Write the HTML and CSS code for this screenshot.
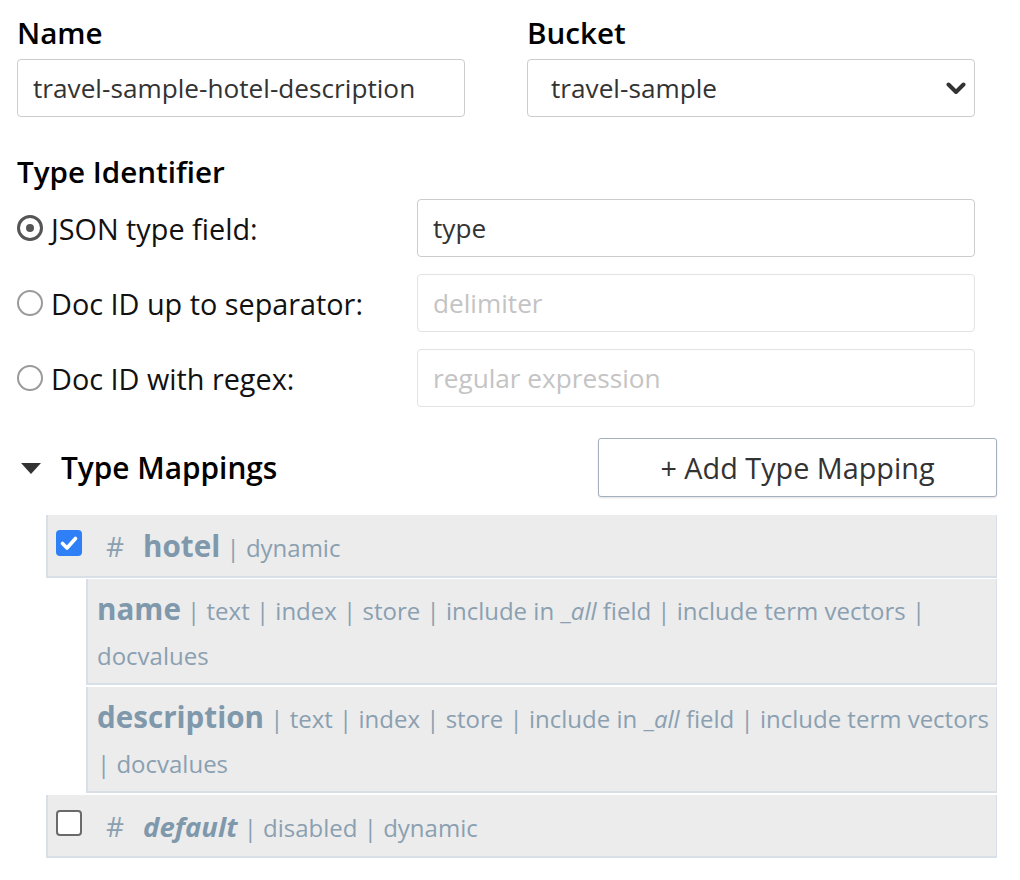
FILE: index.html
```html
<!DOCTYPE html>
<html>
<head>
<meta charset="utf-8">
<link rel="stylesheet" href="styles.css">
</head>
<body>
<div class="page">
  <div class="top-row">
    <div class="field">
      <div class="lbl">Name</div>
      <input class="text-input" type="text" value="travel-sample-hotel-description">
    </div>
    <div class="field">
      <div class="lbl">Bucket</div>
      <div class="select">
        <span>travel-sample</span>
        <svg class="chev" width="20" height="13" viewBox="0 0 20 13"><path d="M2.5 2.5 L10 10 L17.5 2.5" fill="none" stroke="#333" stroke-width="4" stroke-linecap="round" stroke-linejoin="round"/></svg>
      </div>
    </div>
  </div>

  <div class="type-id">
    <div class="lbl">Type Identifier</div>
    <div class="radio-row">
      <label class="radio-lbl"><span class="radio checked"></span>JSON type field:</label>
      <input class="text-input" type="text" value="type">
    </div>
    <div class="radio-row">
      <label class="radio-lbl"><span class="radio"></span>Doc ID up to separator:</label>
      <input class="text-input dim" type="text" placeholder="delimiter">
    </div>
    <div class="radio-row">
      <label class="radio-lbl"><span class="radio"></span>Doc ID with regex:</label>
      <input class="text-input dim" type="text" placeholder="regular expression">
    </div>
  </div>

  <div class="mappings-head">
    <div class="toggle">
      <svg class="tri" width="20" height="11" viewBox="0 0 20 11"><path d="M0 0 H20 L10 11 Z" fill="#333"/></svg>
      <span>Type Mappings</span>
    </div>
    <button class="add-btn">+ Add Type Mapping</button>
  </div>

  <div class="mapping-list">
    <div class="mapping">
      <div class="map-row">
        <span class="cb checked"><svg width="26" height="26" viewBox="0 0 26 26"><path d="M6.5 13.5 L11 18 L19.5 8.5" fill="none" stroke="#fff" stroke-width="3.6" stroke-linecap="round" stroke-linejoin="round"/></svg></span><span class="hash">#</span><span class="name">hotel</span> <span class="sep">|</span> dynamic
      </div>
      <div class="fields">
        <div class="field-row"><span class="name">name</span> <span class="sep">|</span> text <span class="sep">|</span> index <span class="sep">|</span> store <span class="sep">|</span> include in _<i>all</i> field <span class="sep">|</span> include term vectors <span class="sep">|</span> docvalues</div>
        <div class="field-row"><span class="name">description</span> <span class="sep">|</span> text <span class="sep">|</span> index <span class="sep">|</span> store <span class="sep">|</span> include in _<i>all</i> field <span class="sep">|</span> include term vectors <span class="sep">|</span> docvalues</div>
      </div>
    </div>
    <div class="mapping">
      <div class="map-row">
        <span class="cb"></span><span class="hash">#</span><span class="name it">default</span> <span class="sep">|</span> disabled <span class="sep">|</span> dynamic
      </div>
    </div>
  </div>
</div>
</body>
</html>
```

FILE: styles.css
```css
* { box-sizing: border-box; }
html, body { margin: 0; padding: 0; background: #fff; }
body { font-family: "Open Sans", "Liberation Sans", sans-serif; color: #111; }

.page {
  width: 997px;
  padding: 15px 0 0 17px;
}

.lbl {
  font-size: 29.6px;
  font-weight: 600;
  line-height: 36px;
  color: #000;
  margin-bottom: 8px;
}

.top-row {
  display: flex;
  gap: 62px;
  width: 958px;
}
.field { width: 448px; }

.text-input {
  display: block;
  width: 100%;
  height: 58px;
  border: 1px solid #cccccc;
  border-radius: 4px;
  padding: 0 15px;
  font-family: "Open Sans", "Liberation Sans", sans-serif;
  font-size: 26.2px;
  color: #333;
  background: #fff;
  outline: none;
}
.text-input.dim { border-color: #e3e3e3; }
.text-input::placeholder { color: #c4c4c4; }

.select {
  height: 58px;
  border: 1px solid #cccccc;
  border-radius: 4px;
  padding: 0 8px 0 23px;
  display: flex;
  align-items: center;
  justify-content: space-between;
  font-size: 26.2px;
  color: #333;
}

.type-id { margin-top: 37px; width: 958px; }
.type-id .lbl { margin-bottom: 9px; }

.radio-row {
  display: grid;
  grid-template-columns: 400px 558px;
  align-items: center;
  margin-bottom: 17px;
}
.radio-row:last-child { margin-bottom: 0; }

.radio-lbl {
  display: flex;
  align-items: center;
  font-size: 28.8px;
  color: #111;
}
.radio {
  width: 26px;
  height: 26px;
  border-radius: 50%;
  border: 2px solid #9a9a9a;
  margin-right: 8px;
  position: relative;
  flex: none;
}
.radio.checked {
  border: 3px solid #555;
}
.radio.checked::after {
  content: "";
  position: absolute;
  left: 6px;
  top: 6px;
  width: 8px;
  height: 8px;
  border-radius: 50%;
  background: #555;
}

.mappings-head {
  margin-top: 31px;
  display: flex;
  justify-content: space-between;
  align-items: center;
  width: 980px;
}
.toggle {
  display: flex;
  align-items: center;
  font-size: 29.8px;
  font-weight: 600;
  color: #000;
}
.tri { margin-left: 4px; margin-right: 20px; margin-top: 2px; }

.add-btn {
  width: 399px;
  height: 59px;
  border: 1px solid #a4b0bd;
  border-radius: 3px;
  background: #fff;
  box-shadow: 0 1px 2px rgba(0,0,0,0.12);
  font-family: "Open Sans", "Liberation Sans", sans-serif;
  font-size: 28.8px;
  color: #333;
  padding: 0;
}

.mapping-list {
  margin: 18px 0 0 29px;
  width: 951px;
}
.mapping { margin-bottom: 2px; }

.map-row, .field-row {
  background: #ececec;
  border-left: 2px solid #d8dfe7;
  border-right: 1px solid #d8dfe7;
  border-bottom: 2px solid #d8dfe7;
  font-size: 24px;
  line-height: 45px;
  color: #8aa0b1;
}
.map-row {
  padding: 10px 8px 6px 8px;
}
.fields {
  margin-left: 40px;
  padding-top: 1px;
}
.field-row {
  padding: 9px 4px 5px 9px;
  margin-bottom: 2px;
}
.fields .field-row:last-child { margin-bottom: 0; }

.name {
  font-weight: 700;
  font-size: 29.6px;
  line-height: 1;
  color: #7f98ab;
}
.name.it { font-style: italic; font-size: 27.5px; }
.sep { color: #8aa0b1; }
.hash {
  display: inline-block;
  margin: 0 19px 0 0;
  font-size: 28px;
  line-height: 1;
}

.cb {
  display: inline-block;
  width: 26px;
  height: 26px;
  border-radius: 4px;
  border: 2px solid #6a6a6a;
  background: #fff;
  vertical-align: 1px;
  margin-right: 24px;
}
.cb.checked {
  border: none;
  background: #2f7ff7;
}
.cb svg { display: block; }
```
